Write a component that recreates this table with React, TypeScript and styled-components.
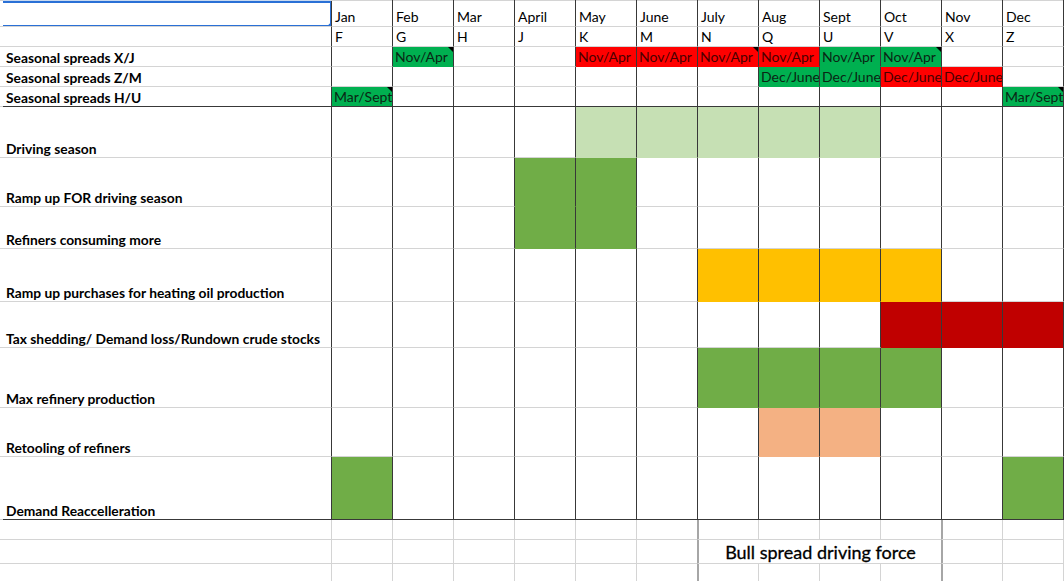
import React from "react";
import styled, { createGlobalStyle } from "styled-components";

const GRID = "#d4d4d4";
const INK = "#383838";
const EDGE = "#a6a6a6";
const SELECT = "#2a70d6";

const FILLS = {
  green: "#00b050",
  red: "#ff0000",
  pale: "#c6e0b4",
  leaf: "#70ad47",
  gold: "#ffc000",
  crimson: "#c00000",
  peach: "#f4b183",
} as const;
type Tone = keyof typeof FILLS;

const MONTHS = ["Jan", "Feb", "Mar", "April", "May", "June", "July", "Aug", "Sept", "Oct", "Nov", "Dec"];
const CODES = ["F", "G", "H", "J", "K", "M", "N", "Q", "U", "V", "X", "Z"];

type Spread = { tone: Tone; text: string; note?: boolean };

const SPREADS: { label: string; cells: Record<number, Spread> }[] = [
  {
    label: "Seasonal spreads X/J",
    cells: {
      1: { tone: "green", text: "Nov/Apr", note: true },
      4: { tone: "red", text: "Nov/Apr" },
      5: { tone: "red", text: "Nov/Apr" },
      6: { tone: "red", text: "Nov/Apr", note: true },
      7: { tone: "red", text: "Nov/Apr" },
      8: { tone: "green", text: "Nov/Apr" },
      9: { tone: "green", text: "Nov/Apr", note: true },
    },
  },
  {
    label: "Seasonal spreads Z/M",
    cells: {
      7: { tone: "green", text: "Dec/June" },
      8: { tone: "green", text: "Dec/June" },
      9: { tone: "red", text: "Dec/June" },
      10: { tone: "red", text: "Dec/June" },
    },
  },
  {
    label: "Seasonal spreads H/U",
    cells: {
      0: { tone: "green", text: "Mar/Sept", note: true },
      11: { tone: "green", text: "Mar/Sept", note: true },
    },
  },
];

const SEASONS: { label: string; tone: Tone; bands: [number, number][] }[] = [
  { label: "Driving season", tone: "pale", bands: [[4, 8]] },
  { label: "Ramp up FOR driving season", tone: "leaf", bands: [[3, 4]] },
  { label: "Refiners consuming more", tone: "leaf", bands: [[3, 4]] },
  { label: "Ramp up purchases for heating oil production", tone: "gold", bands: [[6, 9]] },
  { label: "Tax shedding/ Demand loss/Rundown crude stocks", tone: "crimson", bands: [[9, 11]] },
  { label: "Max refinery production", tone: "leaf", bands: [[6, 9]] },
  { label: "Retooling of refiners", tone: "peach", bands: [[7, 8]] },
  { label: "Demand Reaccelleration", tone: "leaf", bands: [[0, 0], [11, 11]] },
];

const seasonTone = (row: number, col: number): Tone | undefined => {
  const s = SEASONS[row];
  if (!s) return undefined;
  return s.bands.some(([a, b]) => col >= a && col <= b) ? s.tone : undefined;
};

const GlobalStyle = createGlobalStyle`
  html, body {
    margin: 0;
    padding: 0;
    background: #ffffff;
    overflow: hidden;
  }
  body {
    font-family: Lato, "Liberation Sans", sans-serif;
    color: #000;
  }
`;

const Sheet = styled.div`
  display: grid;
  grid-template-columns: 3px 329px repeat(12, 61px);
  grid-template-rows: 1px 26px 20px 20px 20px 20px 51px 49px 42px 53px 46px 60px 49px 63px 20px 24px 20px;
  width: 1064px;
  height: 581px;
  overflow: hidden;
`;

const Cell = styled.div<{ $fill?: string; $right?: string; $bottom?: string; $inset?: boolean }>`
  position: relative;
  box-sizing: border-box;
  min-width: 0;
  display: flex;
  align-items: flex-end;
  overflow: hidden;
  white-space: nowrap;
  padding: 0 0 1px 3px;
  background: ${(p) => p.$fill ?? "#ffffff"};
  border-right: 1px solid ${(p) => p.$right ?? GRID};
  border-bottom: 1px solid ${(p) => p.$bottom ?? GRID};
  box-shadow: ${(p) => (p.$inset ? `inset 1px 0 0 ${EDGE}` : "none")};
  font-size: 14px;
  line-height: 17px;
`;

const Strip = styled.div<{ $tint?: boolean; $right?: string }>`
  box-sizing: border-box;
  background: ${(p) => (p.$tint ? "#c9d9ef" : GRID)};
  border-right: 1px solid ${(p) => p.$right ?? GRID};
`;

const HeaderCell = styled(Cell)`
  font-weight: 400;
  padding-bottom: 1px;
`;

const LabelCell = styled(Cell)`
  font-weight: 700;
  font-size: 13.8px;
  padding-bottom: 0;
`;

const SpreadCell = styled(Cell)<{ $tone?: Tone }>`
  color: ${(p) => (p.$tone === "red" ? "#4a0000" : "#0a2614")};
  padding-bottom: 1px;
  padding-left: 2px;
`;

const Note = styled.span`
  position: absolute;
  top: 0;
  right: 0;
  width: 0;
  height: 0;
  border-top: 5px solid #000;
  border-left: 5px solid transparent;
`;

const Selection = styled.span`
  position: absolute;
  top: 0;
  left: -2px;
  right: -1px;
  bottom: -1px;
  border: 2px solid ${SELECT};
  pointer-events: none;
`;

const Handle = styled.span`
  position: absolute;
  right: -5px;
  bottom: -5px;
  width: 8px;
  height: 8px;
  border-radius: 50%;
  background: ${SELECT};
`;

const BullCell = styled(Cell)`
  grid-column: 9 / 13;
  justify-content: center;
  align-items: center;
  padding: 0 0 0 2px;
  font-size: 18px;
  font-weight: 400;
  line-height: 20px;
  color: #000;
  -webkit-text-stroke: 0.3px #000;
  border-right-color: ${EDGE};
  box-shadow: inset 1px 0 0 ${EDGE};
`;

export default function App() {
  const rows: React.ReactNode[] = [];

  // row above the visible sheet: only its bottom gridline shows
  rows.push(<Strip key="s0" />, <Strip key="s1" $tint />);
  MONTHS.forEach((m) => rows.push(<Strip key={`s-${m}`} $right={INK} />));

  // month names
  rows.push(
    <Cell key="h0" />,
    <Cell key="h1" $right={INK}>
      <Selection />
      <Handle />
    </Cell>,
  );
  MONTHS.forEach((m) =>
    rows.push(
      <HeaderCell key={`m-${m}`} $right={INK}>
        {m}
      </HeaderCell>,
    ),
  );

  // contract codes
  rows.push(<Cell key="c0" />, <Cell key="c1" $right={INK} />);
  CODES.forEach((c) =>
    rows.push(
      <HeaderCell key={`c-${c}`} $right={INK}>
        {c}
      </HeaderCell>,
    ),
  );

  // seasonal spreads
  SPREADS.forEach((row, r) => {
    const last = r === SPREADS.length - 1;
    rows.push(
      <Cell key={`sp${r}-0`} />,
      <LabelCell key={`sp${r}-1`} $right={INK} $bottom={last ? INK : GRID}>
        {row.label}
      </LabelCell>,
    );
    MONTHS.forEach((_, i) => {
      const c = row.cells[i];
      const fill = c ? FILLS[c.tone] : undefined;
      rows.push(
        <SpreadCell
          key={`sp${r}-m${i}`}
          $tone={c?.tone}
          $fill={fill}
          $right={INK}
          $bottom={last ? INK : fill ?? GRID}
        >
          {c?.text}
          {c?.note && <Note />}
        </SpreadCell>,
      );
    });
  });

  // seasonal drivers
  SEASONS.forEach((row, r) => {
    const last = r === SEASONS.length - 1;
    rows.push(
      <Cell key={`se${r}-0`} />,
      <LabelCell key={`se${r}-1`} $right={INK} $bottom={last ? INK : GRID}>
        {row.label}
      </LabelCell>,
    );
    MONTHS.forEach((_, i) => {
      const tone = seasonTone(r, i);
      const fill = tone ? FILLS[tone] : undefined;
      rows.push(
        <Cell key={`se${r}-m${i}`} $fill={fill} $right={INK} $bottom={last ? INK : fill ?? GRID} />,
      );
    });
  });

  // empty rows below, with the "Bull spread driving force" box over July-Oct
  [0, 1, 2].forEach((t) => {
    rows.push(<Cell key={`t${t}-0`} />, <Cell key={`t${t}-1`} />);
    MONTHS.forEach((_, i) => {
      if (t === 1 && i >= 6 && i <= 9) {
        if (i === 6) rows.push(<BullCell key={`t${t}-bull`}>Bull spread driving force</BullCell>);
        return;
      }
      rows.push(
        <Cell
          key={`t${t}-m${i}`}
          $right={i === 5 || i === 9 ? EDGE : GRID}
          $inset={i === 6 || i === 10}
        />,
      );
    });
  });

  return (
    <>
      <GlobalStyle />
      <Sheet>{rows}</Sheet>
    </>
  );
}
